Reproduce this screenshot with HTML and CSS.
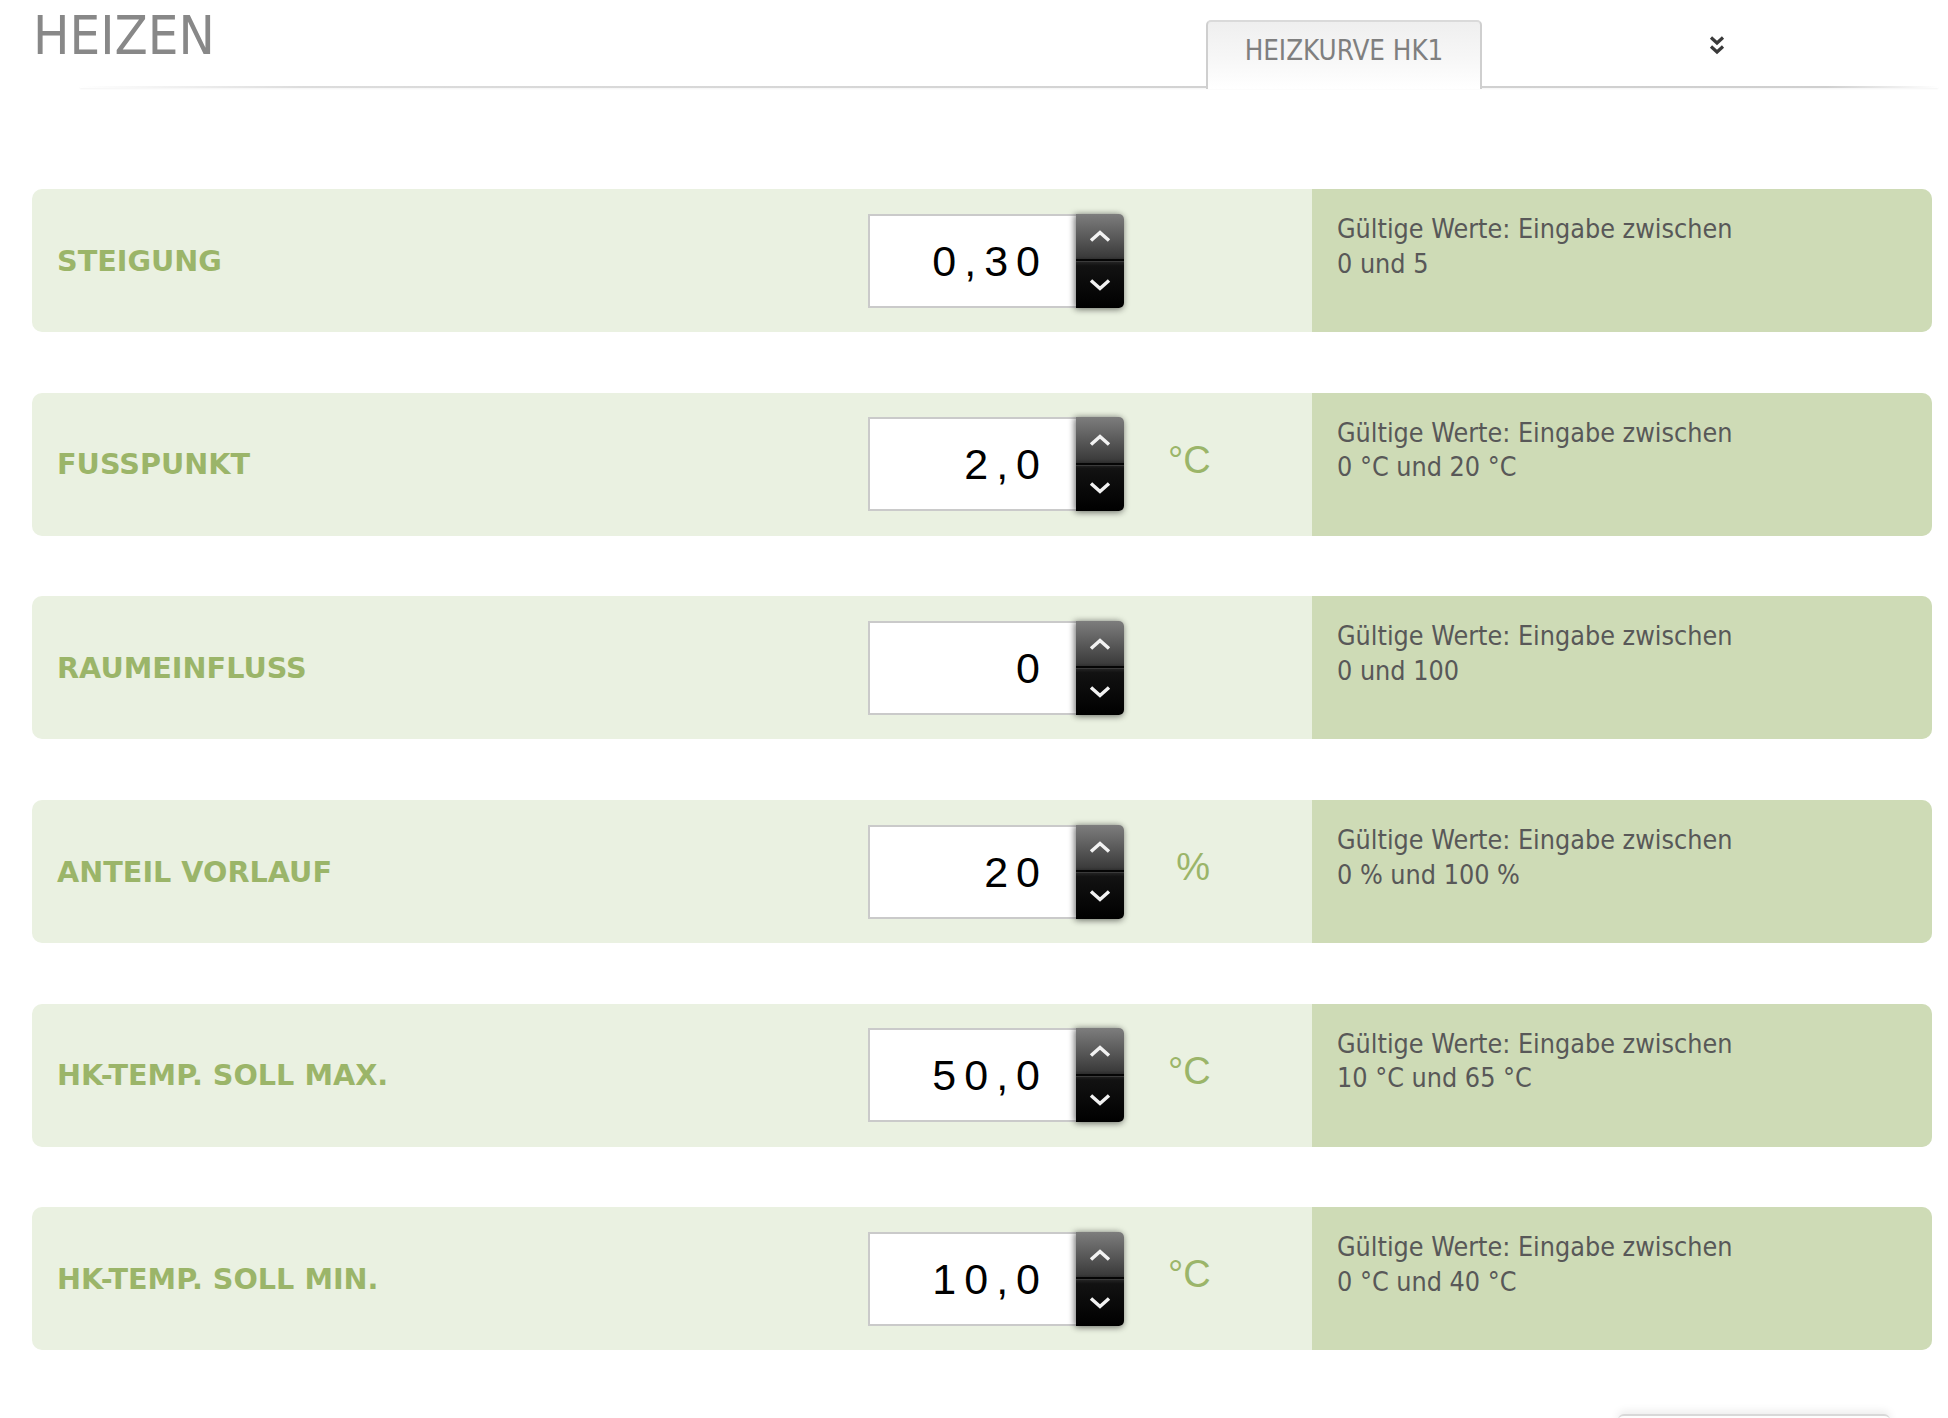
FILE: index.html
```html
<!DOCTYPE html>
<html lang="de">
<head>
<meta charset="utf-8">
<title>Heizen</title>
<link rel="stylesheet" href="styles.css">
</head>
<body>
<div class="page">
  <header class="top">
    <h1 class="title">HEIZEN</h1>
    <div class="tab">HEIZKURVE HK1</div>
    <div class="more">
      <svg width="16" height="22" viewBox="0 0 16 22"><path d="M2 2.5 L8 8 L14 2.5 M2 11.5 L8 17 L14 11.5" fill="none" stroke="#3a3a3a" stroke-width="3.2"/></svg>
    </div>
  </header>

  <main class="rows">
    <section class="row">
      <div class="main">
        <div class="label">STEIGUNG</div>
        <div class="field">
          <div class="value">0,30</div>
          <div class="spin">
            <span class="up"><svg width="24" height="14" viewBox="0 0 24 14"><path d="M3 11.5 L12 3.5 L21 11.5" fill="none" stroke="#f2f2f2" stroke-width="3.5"/></svg></span>
            <span class="down"><svg width="24" height="14" viewBox="0 0 24 14"><path d="M3 2.5 L12 10.5 L21 2.5" fill="none" stroke="#f2f2f2" stroke-width="3.5"/></svg></span>
          </div>
        </div>
        <div class="unit"></div>
      </div>
      <div class="help">Gültige Werte: Eingabe zwischen<br>0 und 5</div>
    </section>

    <section class="row">
      <div class="main">
        <div class="label">FUSSPUNKT</div>
        <div class="field">
          <div class="value">2,0</div>
          <div class="spin">
            <span class="up"><svg width="24" height="14" viewBox="0 0 24 14"><path d="M3 11.5 L12 3.5 L21 11.5" fill="none" stroke="#f2f2f2" stroke-width="3.5"/></svg></span>
            <span class="down"><svg width="24" height="14" viewBox="0 0 24 14"><path d="M3 2.5 L12 10.5 L21 2.5" fill="none" stroke="#f2f2f2" stroke-width="3.5"/></svg></span>
          </div>
        </div>
        <div class="unit">°C</div>
      </div>
      <div class="help">Gültige Werte: Eingabe zwischen<br>0 °C und 20 °C</div>
    </section>

    <section class="row">
      <div class="main">
        <div class="label">RAUMEINFLUSS</div>
        <div class="field">
          <div class="value">0</div>
          <div class="spin">
            <span class="up"><svg width="24" height="14" viewBox="0 0 24 14"><path d="M3 11.5 L12 3.5 L21 11.5" fill="none" stroke="#f2f2f2" stroke-width="3.5"/></svg></span>
            <span class="down"><svg width="24" height="14" viewBox="0 0 24 14"><path d="M3 2.5 L12 10.5 L21 2.5" fill="none" stroke="#f2f2f2" stroke-width="3.5"/></svg></span>
          </div>
        </div>
        <div class="unit"></div>
      </div>
      <div class="help">Gültige Werte: Eingabe zwischen<br>0 und 100</div>
    </section>

    <section class="row">
      <div class="main">
        <div class="label">ANTEIL VORLAUF</div>
        <div class="field">
          <div class="value">20</div>
          <div class="spin">
            <span class="up"><svg width="24" height="14" viewBox="0 0 24 14"><path d="M3 11.5 L12 3.5 L21 11.5" fill="none" stroke="#f2f2f2" stroke-width="3.5"/></svg></span>
            <span class="down"><svg width="24" height="14" viewBox="0 0 24 14"><path d="M3 2.5 L12 10.5 L21 2.5" fill="none" stroke="#f2f2f2" stroke-width="3.5"/></svg></span>
          </div>
        </div>
        <div class="unit">%</div>
      </div>
      <div class="help">Gültige Werte: Eingabe zwischen<br>0 % und 100 %</div>
    </section>

    <section class="row">
      <div class="main">
        <div class="label">HK-TEMP. SOLL MAX.</div>
        <div class="field">
          <div class="value">50,0</div>
          <div class="spin">
            <span class="up"><svg width="24" height="14" viewBox="0 0 24 14"><path d="M3 11.5 L12 3.5 L21 11.5" fill="none" stroke="#f2f2f2" stroke-width="3.5"/></svg></span>
            <span class="down"><svg width="24" height="14" viewBox="0 0 24 14"><path d="M3 2.5 L12 10.5 L21 2.5" fill="none" stroke="#f2f2f2" stroke-width="3.5"/></svg></span>
          </div>
        </div>
        <div class="unit">°C</div>
      </div>
      <div class="help">Gültige Werte: Eingabe zwischen<br>10 °C und 65 °C</div>
    </section>

    <section class="row">
      <div class="main">
        <div class="label">HK-TEMP. SOLL MIN.</div>
        <div class="field">
          <div class="value">10,0</div>
          <div class="spin">
            <span class="up"><svg width="24" height="14" viewBox="0 0 24 14"><path d="M3 11.5 L12 3.5 L21 11.5" fill="none" stroke="#f2f2f2" stroke-width="3.5"/></svg></span>
            <span class="down"><svg width="24" height="14" viewBox="0 0 24 14"><path d="M3 2.5 L12 10.5 L21 2.5" fill="none" stroke="#f2f2f2" stroke-width="3.5"/></svg></span>
          </div>
        </div>
        <div class="unit">°C</div>
      </div>
      <div class="help">Gültige Werte: Eingabe zwischen<br>0 °C und 40 °C</div>
    </section>
  </main>

  <div class="footer"><div class="btn"></div></div>
</div>
</body>
</html>
```
FILE: styles.css
```css
html, body {
  margin: 0;
  padding: 0;
  background: #ffffff;
  overflow: hidden;
}

.page {
  width: 1948px;
  height: 1418px;
  overflow: hidden;
}

.top {
  position: relative;
  display: flex;
  align-items: flex-start;
  height: 88px;
  padding-left: 33px;
  box-sizing: border-box;
}

.top::after {
  content: "";
  position: absolute;
  left: 80px;
  right: 10px;
  bottom: 0;
  height: 2px;
  background: linear-gradient(to right, rgba(210,210,210,0) 0%, #dcdcdc 12%, #d2d2d2 60%, #cfcfcf 94%, rgba(210,210,210,0) 100%);
  box-shadow: 0 1px 2px rgba(0,0,0,0.05);
}

.title {
  flex: 0 0 1173px;
  margin: 9px 0 0 0;
  font-family: "DejaVu Sans Condensed", "DejaVu Sans", sans-serif;
  font-weight: normal;
  font-size: 54px;
  line-height: 54px;
  color: #888888;
}

.tab {
  position: relative;
  z-index: 1;
  align-self: flex-end;
  box-sizing: border-box;
  width: 276px;
  height: 69px;
  margin-bottom: -1px;
  padding-top: 15px;
  border: 2px solid #cfcfcf;
  border-top-color: #dadada;
  border-bottom: none;
  border-radius: 5px 5px 0 0;
  background: linear-gradient(to bottom, #efefef 0%, #f7f7f7 55%, #ffffff 100%);
  text-align: center;
  font-family: "DejaVu Sans Condensed", "DejaVu Sans", sans-serif;
  font-size: 27.5px;
  line-height: 27.5px;
  color: #7f7f7f;
}

.more {
  margin: 35px 0 0 227px;
  line-height: 0;
}

.rows {
  display: flex;
  flex-direction: column;
  gap: 60.7px;
  margin: 101px 16px 0 32px;
}

.row {
  display: flex;
  height: 143px;
  border-radius: 10px;
  overflow: hidden;
  background: #eaf1e1;
}

.main {
  flex: 1;
  display: flex;
  align-items: center;
  padding-left: 25px;
}

.label {
  flex: 0 0 811px;
  font-family: "DejaVu Sans", Verdana, sans-serif;
  font-weight: bold;
  font-size: 28.7px;
  color: #9bb569;
}

.field {
  display: flex;
  height: 94px;
}

.value {
  box-sizing: border-box;
  width: 208px;
  height: 94px;
  border: 2px solid #cacaca;
  border-right: none;
  background: #ffffff;
  padding-right: 28px;
  text-align: right;
  font-family: "Liberation Sans", Arial, sans-serif;
  font-size: 43px;
  line-height: 90px;
  letter-spacing: 8px;
  color: #000000;
}

.spin {
  position: relative;
  display: flex;
  flex-direction: column;
  width: 48px;
  height: 94px;
  border-radius: 0 5px 5px 0;
  background: linear-gradient(to bottom, #7d7d7d 0%, #3c3c3c 45%, #121212 55%, #000000 100%);
  box-shadow: -2px 0 6px rgba(0,0,0,0.35), 0 2px 6px rgba(0,0,0,0.3);
}

.spin span {
  flex: 1;
  display: flex;
  align-items: center;
  justify-content: center;
}

.spin .up {
  border-bottom: 2px solid #050505;
}

.spin .down {
  border-top: 1px solid #3a3a3a;
}

.unit {
  width: 42px;
  margin-left: 44px;
  margin-bottom: 8px;
  text-align: right;
  font-family: "Liberation Sans", Arial, sans-serif;
  font-size: 38px;
  color: #9bb569;
  white-space: nowrap;
}

.help {
  flex: 0 0 620px;
  box-sizing: border-box;
  padding: 23px 25px;
  background: #cedbb6;
  font-family: "DejaVu Sans Condensed", "DejaVu Sans", sans-serif;
  font-size: 26.7px;
  line-height: 34.5px;
  color: #585858;
}

.footer {
  display: flex;
  justify-content: flex-end;
  margin-top: 64px;
  padding-right: 58px;
}

.btn {
  width: 272px;
  height: 40px;
  border-top: 2px solid #d8d8d8;
  border-radius: 6px 6px 0 0;
  background: #fdfdfd;
  box-shadow: 0 -3px 8px rgba(0,0,0,0.08);
}
```
